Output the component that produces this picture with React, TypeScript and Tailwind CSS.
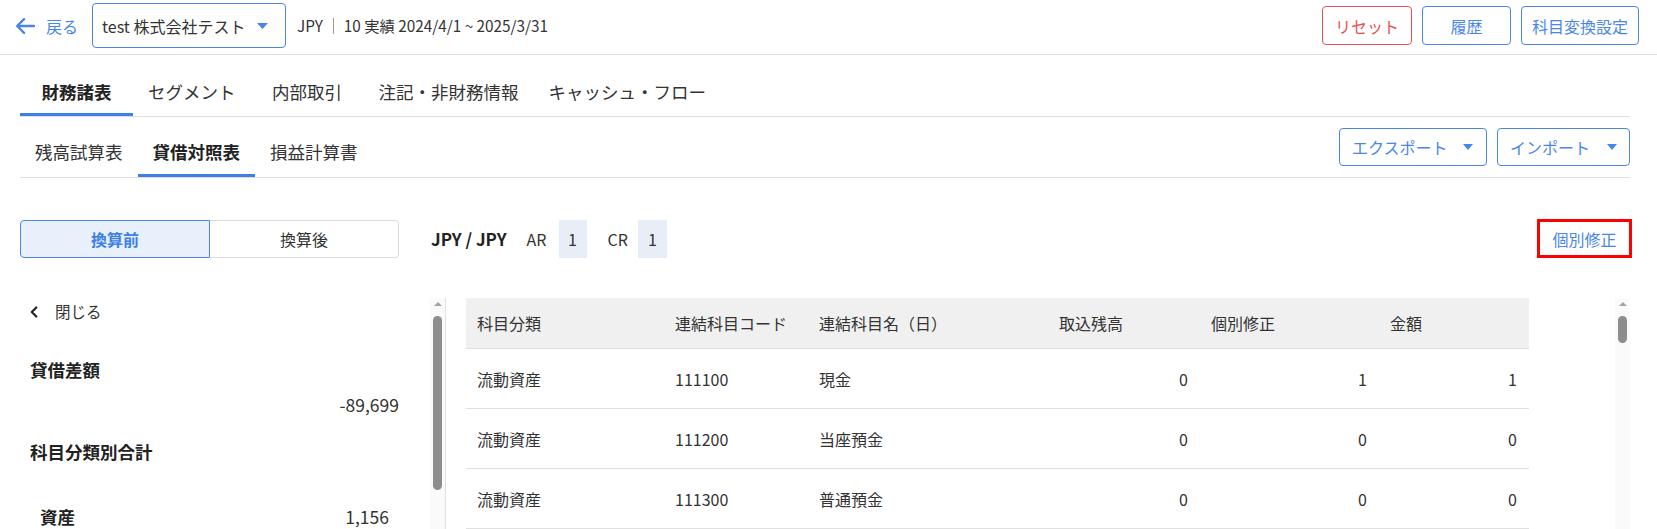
import React from "react";

const BLUE = "text-[#4a86e8]";

function Caret({ w = 11, h = 6, color = "#4a86e8" }: { w?: number; h?: number; color?: string }) {
  return (
    <svg width={w} height={h} viewBox={`0 0 ${w} ${h}`}>
      <polygon points={`0,0 ${w},0 ${w / 2},${h}`} fill={color} />
    </svg>
  );
}

function FakeScrollbar({ thumb }: { thumb: number }) {
  return (
    <div className="flex w-[15px] shrink-0 flex-col items-center bg-[#fafafa] pt-[4px]">
      <svg width="8" height="4" viewBox="0 0 8 4">
        <polygon points="0,4 8,4 4,0" fill="#a3a3a3" />
      </svg>
      <div className="mt-[10px] w-[9px] rounded-full bg-[#8d8d8d]" style={{ height: thumb }} />
    </div>
  );
}

const rows = [
  ["流動資産", "111100", "現金", "0", "1", "1"],
  ["流動資産", "111200", "当座預金", "0", "0", "0"],
  ["流動資産", "111300", "普通預金", "0", "0", "0"],
];

export default function App() {
  const mainTabs = ["財務諸表", "セグメント", "内部取引", "注記・非財務情報", "キャッシュ・フロー"];
  const subTabs = ["残高試算表", "貸借対照表", "損益計算書"];
  return (
    <div className="h-[529px] w-[1657px] overflow-hidden bg-white font-['Noto_Sans_CJK_JP','Noto_Sans',sans-serif] text-[#333]">
      {/* Header */}
      <div className="flex h-[55px] items-center border-b border-[#e0e0e0] pb-[3px] pl-[15px] pr-[18px]">
        <div className={`flex items-center gap-[11px] text-[16px] ${BLUE}`}>
          <svg width="20" height="16" viewBox="0 0 20 16" fill="none">
            <path d="M19 8H2.5M9 1.2L2.2 8L9 14.8" stroke="#4a86e8" strokeWidth="2.4" strokeLinecap="round" strokeLinejoin="round" />
          </svg>
          <span>戻る</span>
        </div>
        <div className="ml-[14px] flex h-[45px] w-[194px] items-center justify-between rounded-[4px] border border-[#4a86e8] pl-[9px] pr-[17px] text-[16px]">
          <span>test 株式会社テスト</span>
          <Caret />
        </div>
        <span className="ml-[11px] text-[15.3px]">JPY</span>
        <span className="mx-[10px] h-[16px] w-px bg-[#9a9a9a]" />
        <span className="text-[15.3px]">10 実績 2024/4/1 ~ 2025/3/31</span>
        <div className="ml-auto flex gap-[10px]">
          <button className="flex h-[39px] w-[90px] items-center justify-center rounded-[4px] border border-[#e85050] text-[16px] text-[#e85050]">
            リセット
          </button>
          <button className={`flex h-[39px] w-[89px] items-center justify-center rounded-[4px] border border-[#4a86e8] text-[16px] ${BLUE}`}>
            履歴
          </button>
          <button className={`flex h-[39px] w-[118px] items-center justify-center rounded-[4px] border border-[#4a86e8] text-[16px] ${BLUE}`}>
            科目変換設定
          </button>
        </div>
      </div>

      {/* Main tabs */}
      <div className="ml-[20px] mt-[12px] flex w-[1610px] border-b border-[#e0e0e0]">
        {mainTabs.map((t, i) => (
          <div
            key={t}
            className={`min-w-[113px] border-b-[3px] px-[15px] pb-[9px] pt-[13px] text-center text-[17.5px] leading-[24px] ${
              i === 0 ? "border-[#3c7fe6] font-bold text-[#222]" : "border-transparent"
            }`}
          >
            {t}
          </div>
        ))}
      </div>

      {/* Sub tabs */}
      <div className="ml-[20px] mt-[10px] flex w-[1610px] items-end justify-between border-b border-[#e0e0e0]">
        <div className="flex">
          {subTabs.map((t, i) => (
            <div
              key={t}
              className={`border-b-[3px] px-[15px] pb-[10px] pt-[13px] text-[17.5px] leading-[24px] ${
                i === 1 ? "border-[#3c7fe6] font-bold text-[#222]" : "border-transparent"
              }`}
            >
              {t}
            </div>
          ))}
        </div>
        <div className="flex gap-[10px] pb-[11px]">
          <button className={`flex h-[38px] w-[148px] items-center rounded-[4px] border border-[#4a86e8] pl-[12px] text-[16px] ${BLUE}`}>
            <span>エクスポート</span>
            <span className="ml-[15px]">
              <Caret w={10} h={6} />
            </span>
          </button>
          <button className={`flex h-[38px] w-[133px] items-center rounded-[4px] border border-[#4a86e8] pl-[12px] text-[16px] ${BLUE}`}>
            <span>インポート</span>
            <span className="ml-[17px]">
              <Caret w={10} h={6} />
            </span>
          </button>
        </div>
      </div>

      {/* Toggle row */}
      <div className="ml-[20px] mt-[41px] flex h-[39px] w-[1610px] items-center">
        <div className="flex h-[38px] w-[379px] text-[16px]">
          <div className="flex w-[190px] items-center justify-center rounded-l-[4px] border border-[#4a86e8] bg-[#e8f0fc] font-bold text-[#3c7fe6]">
            換算前
          </div>
          <div className="flex flex-1 items-center justify-center rounded-r-[4px] border border-l-0 border-[#dcdcdc]">
            換算後
          </div>
        </div>
        <span className="ml-[32px] text-[17px] font-bold text-[#222]">JPY / JPY</span>
        <span className="ml-[20px] text-[16px]">AR</span>
        <span className="ml-[12px] flex h-[38px] w-[28px] items-center justify-center bg-[#e8eef8] text-[16px]">1</span>
        <span className="ml-[21px] text-[16px]">CR</span>
        <span className="ml-[10px] flex h-[38px] w-[29px] items-center justify-center bg-[#e8eef8] text-[16px]">1</span>
        <div className="ml-auto mr-[-2px] flex h-[39px] w-[95px] items-center justify-center border-[3px] border-[#ff0000] text-[16px] text-[#4a86e8]">
          個別修正
        </div>
      </div>

      {/* Content */}
      <div className="ml-[20px] mt-[40px] flex h-[231px] w-[1610px]">
        {/* Left panel */}
        <div className="flex w-[426px] shrink-0 border-r border-[#e0e0e0]">
          <div className="flex-1 pl-[10px] pr-[31px]">
            <div className="flex h-[28px] items-center gap-[17px] text-[15.5px]">
              <svg width="8" height="12" viewBox="0 0 8 12" fill="none">
                <path d="M6.3 1.5L1.8 6L6.3 10.5" stroke="#222" strokeWidth="2.2" strokeLinecap="round" strokeLinejoin="round" />
              </svg>
              <span>閉じる</span>
            </div>
            <div className="mt-[32px] text-[17.5px] font-bold leading-[24px] text-[#222]">貸借差額</div>
            <div className="mt-[11px] text-right text-[17.5px] leading-[24px]">-89,699</div>
            <div className="mt-[23px] text-[17.5px] font-bold leading-[24px] text-[#222]">科目分類別合計</div>
            <div className="mt-[41px] flex justify-between px-[10px] text-[17.5px] leading-[24px]">
              <span className="font-bold text-[#222]">資産</span>
              <span>1,156</span>
            </div>
          </div>
          <FakeScrollbar thumb={174} />
        </div>

        {/* Right panel */}
        <div className="flex flex-1">
          <div className="flex-1 pl-[20px]">
            <div className="w-[1063px] text-[16px]">
              <div className="grid h-[51px] grid-cols-[198px_144px_240px_152px_179px_150px] items-center border-b border-[#e0e0e0] bg-[#f0f0f0]">
                {["科目分類", "連結科目コード", "連結科目名（日）", "取込残高", "個別修正", "金額"].map((h) => (
                  <div key={h} className="pl-[11px]">
                    {h}
                  </div>
                ))}
              </div>
              {rows.map((r) => (
                <div
                  key={r[1]}
                  className="grid h-[60px] grid-cols-[198px_144px_240px_152px_179px_150px] items-center border-b border-[#e0e0e0] leading-[22px]"
                >
                  <div className="pl-[11px]">{r[0]}</div>
                  <div className="pl-[11px]">{r[1]}</div>
                  <div className="pl-[11px]">{r[2]}</div>
                  <div className="pr-[12px] text-right">{r[3]}</div>
                  <div className="pr-[12px] text-right">{r[4]}</div>
                  <div className="pr-[12px] text-right">{r[5]}</div>
                </div>
              ))}
            </div>
          </div>
          <FakeScrollbar thumb={27} />
        </div>
      </div>
    </div>
  );
}
